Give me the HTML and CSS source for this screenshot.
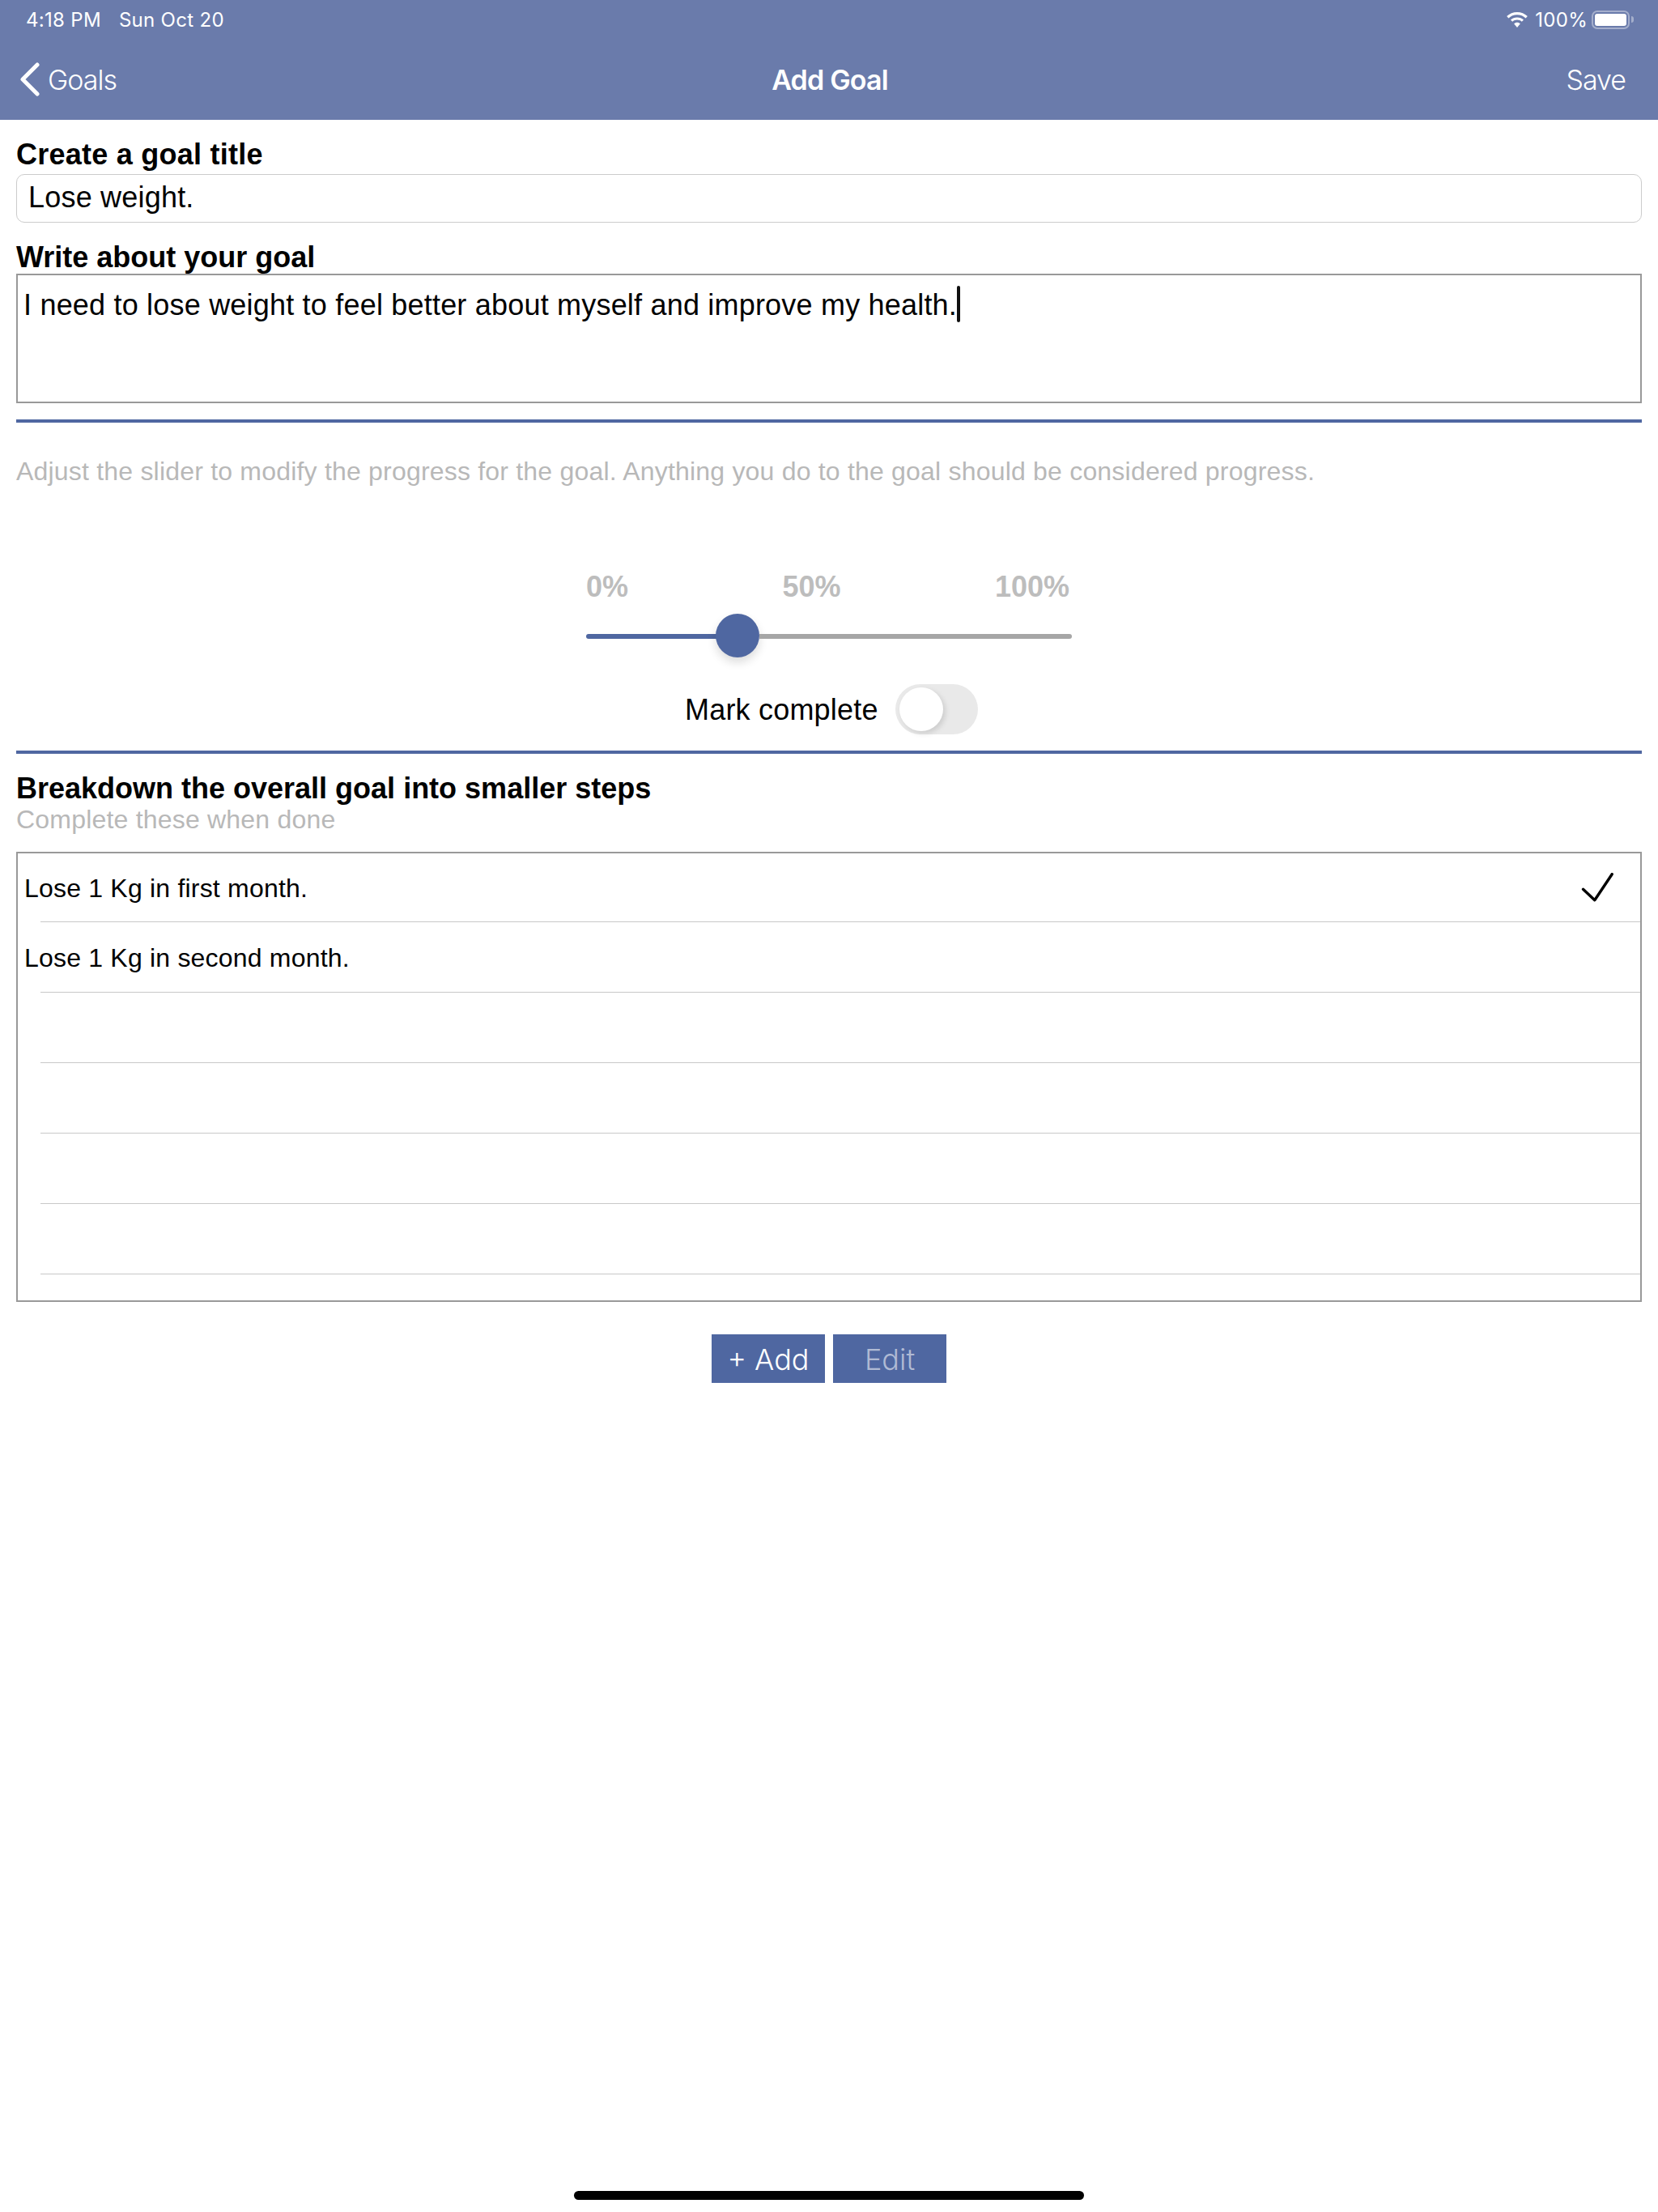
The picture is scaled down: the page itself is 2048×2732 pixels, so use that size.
FILE: index.html
```html
<!DOCTYPE html>
<html lang="en">

<head>
    <meta charset="UTF-8">
    <meta name="viewport" content="width=device-width, initial-scale=1.0">
    <title>Add Goal</title>
    <link rel="stylesheet" href="styles.css">
</head>

<body>

    <div class="page">
        <div class="header">
            <div class="status-bar">
                <div class="status-left">
                    <span>4:18 PM</span>
                    <span>Sun Oct 20</span>
                </div>
                <div class="status-right">
                    <svg class="wifi-icon" viewBox="0 0 26 19" width="26" height="19">
                        <path d="M13 0C8.1 0 3.6 1.9.2 5.1l2.2 2.3C5.2 4.8 8.9 3.2 13 3.2s7.8 1.6 10.6 4.2l2.2-2.3C22.400 1.9 17.900 0 13 0z" fill="#fff"/>
                        <path d="M13 6.400c-3.100 0-5.900 1.200-8 3.100l2.200 2.300c1.500-1.400 3.500-2.200 5.800-2.200s4.300.8 5.800 2.200L21 9.500c-2.100-1.900-4.900-3.100-8-3.100z" fill="#fff"/>
                        <path d="M13 12.700c-1.500 0-2.900.6-3.900 1.500L13 19l3.900-4.800c-1-.9-2.400-1.500-3.900-1.500z" fill="#fff"/>
                    </svg>
                    <span class="battery-text">100%</span>
                    <div class="battery">
                        <div class="battery-level"></div>
                    </div>
                    <div class="battery-nub"></div>
                </div>
            </div>
            <div class="nav-bar">
                <div class="nav-back">
                    <svg class="back-icon" viewBox="0 0 25 42" width="25" height="42">
                        <path d="M22 3L4 21l18 18" fill="none" stroke="#fff" stroke-width="5" stroke-linecap="round" stroke-linejoin="round"/>
                    </svg>
                    <span>Goals</span>
                </div>
                <div class="nav-title">Add Goal</div>
                <div class="nav-save">Save</div>
            </div>
        </div>

        <div class="content">
            <div class="label label-first">Create a goal title</div>
            <div class="title-input">Lose weight.</div>

            <div class="label label-second">Write about your goal</div>
            <div class="about-input">I need to lose weight to feel better about myself and improve my health.<span class="caret"></span></div>

            <div class="divider divider-top"></div>

            <div class="hint">Adjust the slider to modify the progress for the goal. Anything you do to the goal should be considered progress.</div>

            <div class="slider-section">
                <div class="slider-labels">
                    <span>0%</span>
                    <span>50%</span>
                    <span>100%</span>
                </div>
                <div class="slider">
                    <div class="slider-fill"></div>
                    <div class="slider-thumb"></div>
                    <div class="slider-rest"></div>
                </div>
            </div>

            <div class="complete-row">
                <span class="complete-text">Mark complete</span>
                <div class="switch">
                    <div class="switch-knob"></div>
                </div>
            </div>

            <div class="divider"></div>

            <div class="label label-steps">Breakdown the overall goal into smaller steps</div>
            <div class="steps-hint">Complete these when done</div>

            <div class="steps-box">
                <div class="step">
                    <span class="step-text">Lose 1 Kg in first month.</span>
                    <svg class="check-icon" viewBox="0 0 42 38" width="42" height="38">
                        <path d="M2.500 20.300L16.800 33.700 38.200 1.700" fill="none" stroke="#000" stroke-width="3.400" stroke-linecap="round" stroke-linejoin="round"/>
                    </svg>
                </div>
                <div class="step"><span class="step-text">Lose 1 Kg in second month.</span></div>
                <div class="step"></div>
                <div class="step"></div>
                <div class="step"></div>
                <div class="step"></div>
            </div>

            <div class="buttons">
                <div class="btn">+ Add</div>
                <div class="btn btn-disabled">Edit</div>
            </div>
        </div>

        <div class="home-bar"></div>
    </div>

</body>

</html>
```

FILE: styles.css
```css
body {
    font-family: 'Liberation Sans', Arial, sans-serif;
    background-color: #fff;
    margin: 0;
    padding: 0;
    color: #000;
}

.page {
    display: flex;
    flex-direction: column;
    height: 2732px;
    overflow: hidden;
}

.header {
    height: 148px;
    background-color: #6a7bab;
    color: #fff;
    font-family: 'Inter', sans-serif;
}

.status-bar {
    display: flex;
    justify-content: space-between;
    align-items: center;
    height: 48px;
    padding: 0 30px 0 32px;
    font-size: 24px;
    letter-spacing: 0.3px;
}

.status-left {
    display: flex;
    gap: 22px;
}

.status-right {
    display: flex;
    align-items: center;
}

.wifi-icon {
    margin-right: 9px;
}

.battery-text {
    margin-right: 5px;
}

.battery {
    box-sizing: border-box;
    width: 47px;
    height: 23px;
    padding: 2px;
    border: 2px solid rgba(255, 255, 255, 0.4);
    border-radius: 7px;
}

.battery-level {
    height: 100%;
    background-color: #fff;
    border-radius: 3px;
}

.battery-nub {
    width: 3px;
    height: 8px;
    margin-left: 2px;
    background-color: rgba(255, 255, 255, 0.4);
    border-radius: 0 3px 3px 0;
}

.nav-bar {
    display: grid;
    grid-template-columns: 1fr auto 1fr;
    align-items: center;
    height: 100px;
    padding: 0 40px 0 24px;
    font-size: 34px;
    letter-spacing: -1px;
}

.nav-back {
    display: flex;
    align-items: center;
    gap: 10px;
    font-weight: 300;
}

.nav-title {
    position: relative;
    left: 9px;
    font-weight: 600;
    letter-spacing: -0.8px;
}

.nav-save {
    text-align: right;
    font-weight: 300;
}

.content {
    padding: 0 20px;
}

.label {
    font-size: 36px;
    font-weight: bold;
    line-height: 40px;
}

.label-first {
    margin-top: 23px;
    margin-bottom: 4px;
    letter-spacing: 0.25px;
}

.label-second {
    margin-top: 23px;
}

.title-input {
    box-sizing: border-box;
    height: 60px;
    padding: 8px 14px;
    font-size: 36px;
    line-height: 40px;
    letter-spacing: 0.2px;
    border: 1px solid #cccccc;
    border-radius: 10px;
}

.about-input {
    box-sizing: border-box;
    height: 160px;
    padding: 17px 7px;
    font-size: 36px;
    line-height: 40px;
    letter-spacing: 0.2px;
    border: 2px solid #999;
}

.caret {
    display: inline-block;
    width: 4px;
    height: 45px;
    margin-top: -4px;
    vertical-align: -9px;
    background-color: #111;
    border-radius: 2px;
}

.divider {
    height: 4px;
    background-color: #4f67a1;
}

.divider-top {
    margin-top: 20px;
}

.hint {
    margin-top: 42px;
    font-size: 32px;
    line-height: 36px;
    letter-spacing: 0.2px;
    color: #b8b8b8;
}

.slider-section {
    width: 600px;
    margin: 105px auto 0 704px;
}

.slider-labels {
    display: flex;
    justify-content: space-between;
    padding-right: 3px;
    font-size: 36px;
    font-weight: bold;
    line-height: 40px;
    color: #bdbdbd;
}

.slider {
    display: flex;
    align-items: center;
    height: 54px;
    margin-top: 13px;
}

.slider-fill {
    width: 164px;
    height: 6px;
    margin-top: 2px;
    background-color: #4f67a1;
    border-radius: 3px 0 0 3px;
}

.slider-thumb {
    flex-shrink: 0;
    width: 54px;
    height: 54px;
    margin-left: -4px;
    background-color: #4f67a1;
    border-radius: 50%;
    box-shadow: 0 6px 12px rgba(0, 0, 0, 0.14);
}

.slider-rest {
    flex: 1;
    height: 6px;
    margin-top: 2px;
    background-color: #a6a6a6;
    border-radius: 0 3px 3px 0;
}

.complete-row {
    display: flex;
    align-items: center;
    gap: 21px;
    margin: 33px 0 20px 826px;
    font-size: 36px;
    letter-spacing: 0.2px;
}

.complete-text {
    padding-top: 2px;
    line-height: 40px;
}

.switch {
    box-sizing: border-box;
    width: 102px;
    height: 62px;
    padding: 4px 5px;
    background-color: #e9e9e9;
    border-radius: 31px;
}

.switch-knob {
    width: 54px;
    height: 54px;
    background-color: #fff;
    border-radius: 50%;
    box-shadow: 3px 3px 6px rgba(0, 0, 0, 0.12);
}

.label-steps {
    margin-top: 23px;
}

.steps-hint {
    font-size: 32px;
    line-height: 36px;
    letter-spacing: 0.2px;
    color: #b8b8b8;
}

.steps-box {
    box-sizing: border-box;
    height: 556px;
    margin-top: 22px;
    border: 2px solid #999;
}

.step {
    box-sizing: border-box;
    display: flex;
    justify-content: space-between;
    align-items: center;
    height: 87px;
    margin-left: 28px;
    padding-top: 2px;
    padding-right: 31px;
    font-size: 32px;
    letter-spacing: 0.2px;
    border-bottom: 1px solid #c8c8c8;
}

.step:first-child {
    height: 85px;
}

.step-text {
    margin-left: -20px;
}

.buttons {
    display: flex;
    gap: 10px;
    margin: 40px 0 0 859px;
}

.btn {
    width: 140px;
    height: 60px;
    background-color: #4f67a1;
    color: #fff;
    font-family: 'Inter', sans-serif;
    font-size: 36px;
    font-weight: 300;
    line-height: 62px;
    text-align: center;
}

.btn-disabled {
    color: #b0bad4;
}

.home-bar {
    width: 630px;
    height: 11px;
    margin: auto auto 15px;
    background-color: #000;
    border-radius: 6px;
}
```
